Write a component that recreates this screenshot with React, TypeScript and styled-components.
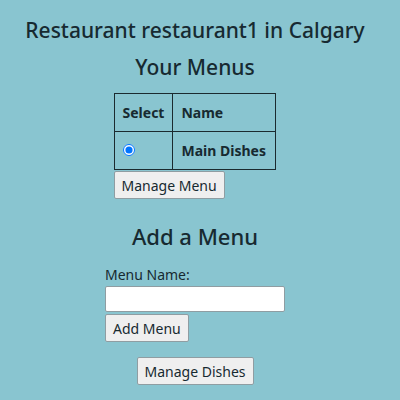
import React, { useState } from 'react';
import styled, { createGlobalStyle } from 'styled-components';

const palette = {
	bg: '#89c5d0',
	text: '#172a31',
	line: '#1b2a2f',
	button: '#efefef',
	buttonBorder: '#8f9da2',
};

const GlobalStyle = createGlobalStyle`
	html, body {
		margin: 0;
		padding: 0;
		background: ${palette.bg};
	}
	body {
		font-family: 'Noto Sans', 'Open Sans', sans-serif;
		color: ${palette.text};
	}
`;

const Page = styled.div`
	width: 390px;
	height: 400px;
	padding-top: 16px;
	box-sizing: border-box;
	display: flex;
	flex-direction: column;
	align-items: center;
`;

const Title = styled.h1`
	margin: 0;
	font-size: 21px;
	line-height: 28px;
	font-weight: 500;
`;

const SubTitle = styled.h2<{ $top: number; $size?: number }>`
	margin: ${(p) => p.$top}px 0 0;
	font-size: ${(p) => p.$size ?? 21}px;
	line-height: 28px;
	font-weight: 500;
`;

const MenuBlock = styled.div`
	margin-top: 12px;
	display: flex;
	flex-direction: column;
	align-items: flex-start;
`;

const Table = styled.table`
	border-collapse: collapse;
	font-size: 14px;
	font-weight: 700;

	th,
	td {
		border: 1px solid ${palette.line};
		padding: 0 8px;
		text-align: left;
		height: 37px;
	}

	th:first-child {
		width: 41px;
	}

	th:last-child {
		width: 86px;
	}

	input {
		margin: 0;
		width: 12px;
		height: 12px;
	}
`;

const Button = styled.button<{ $top?: number }>`
	margin-top: ${(p) => p.$top ?? 0}px;
	height: 28px;
	padding: 0 7px;
	font-family: inherit;
	font-size: 14px;
	color: ${palette.text};
	background: ${palette.button};
	border: 1px solid ${palette.buttonBorder};
	border-radius: 2px;
`;

const Form = styled.form`
	margin-top: 16px;
	width: 180px;
	display: flex;
	flex-direction: column;
	align-items: flex-start;
`;

const Label = styled.label`
	font-size: 14px;
	line-height: 18px;
	display: flex;
	flex-direction: column;
	gap: 2px;
	width: 100%;
`;

const TextInput = styled.input`
	box-sizing: border-box;
	width: 180px;
	height: 26px;
	margin: 0 0 1px;
	border: 1px solid ${palette.buttonBorder};
	border-radius: 2px;
	background: #fff;
`;

export default function App() {
	const [menuName, setMenuName] = useState('');

	return (
		<>
			<GlobalStyle />
			<Page>
				<Title>Restaurant restaurant1 in Calgary</Title>
				<SubTitle $top={9}>Your Menus</SubTitle>
				<MenuBlock>
					<Table>
						<thead>
							<tr>
								<th>Select</th>
								<th>Name</th>
							</tr>
						</thead>
						<tbody>
							<tr>
								<td>
									<input type='radio' name='menu' defaultChecked />
								</td>
								<td>Main Dishes</td>
							</tr>
						</tbody>
					</Table>
					<Button $top={1}>Manage Menu</Button>
				</MenuBlock>
				<SubTitle $top={23} $size={22}>
					Add a Menu
				</SubTitle>
				<Form onSubmit={(e) => e.preventDefault()}>
					<Label>
						Menu Name:
						<TextInput
							value={menuName}
							onChange={(e) => setMenuName(e.target.value)}
						/>
					</Label>
					<Button $top={1}>Add Menu</Button>
				</Form>
				<Button $top={15}>Manage Dishes</Button>
			</Page>
		</>
	);
}
